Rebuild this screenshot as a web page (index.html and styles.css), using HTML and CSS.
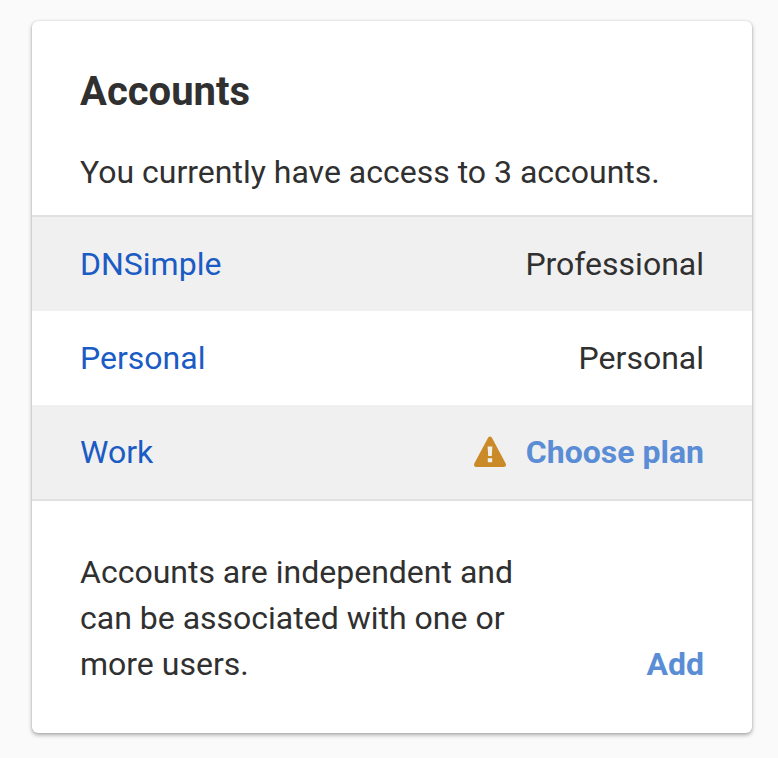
FILE: index.html
```html
<!DOCTYPE html>
<html lang="en">
<head>
<meta charset="utf-8">
<title>Accounts</title>
<link rel="stylesheet" href="styles.css">
</head>
<body>
<section class="card">
  <header class="card-header">
    <h2 class="title">Accounts</h2>
    <p class="summary">You currently have access to 3 accounts.</p>
  </header>
  <ul class="accounts">
    <li class="account"><a class="link" href="#">DNSimple</a><span>Professional</span></li>
    <li class="account"><a class="link" href="#">Personal</a><span>Personal</span></li>
    <li class="account"><a class="link" href="#">Work</a>
      <span class="plan">
        <svg class="warning" viewBox="0 0 34 32" aria-hidden="true"><path fill="#cb8a28" fill-rule="evenodd" d="M15.2 1.6Q17 -.8 18.8 1.6L32.7 27.4Q33.9 30.8 31 31H3Q.1 30.8 1.3 27.4ZM14.6 10.5L15.2 20H18.8L19.4 10.5ZM14.8 22.2V26.3H19.2V22.2Z"/></svg>
        <a class="action" href="#">Choose plan</a>
      </span>
    </li>
  </ul>
  <footer class="card-footer">
    <p class="note">Accounts are independent and can be associated with one or more users.</p>
    <a class="action" href="#">Add</a>
  </footer>
</section>
</body>
</html>
```
FILE: styles.css
```css
* { box-sizing: border-box; }
body {
  margin: 0;
  padding: 21px 26px 25px 32px;
  background: #fafafa;
  color: #303030;
  font: 32px/46px Roboto, "Liberation Sans", sans-serif;
}
a { text-decoration: none; }
.card {
  width: 720px;
  height: 712px;
  background: #fff;
  border-radius: 6px;
  box-shadow: 0 2px 4px rgba(0, 0, 0, .32), 0 0 2px rgba(0, 0, 0, .16);
}
.card-header { height: 194px; padding: 47px 48px 0; }
.title { margin: 0; font-size: 40px; line-height: 48px; font-weight: 700; }
.summary { margin: 33px 0 0; }
.accounts {
  margin: 0;
  padding: 0;
  list-style: none;
  border-top: 2px solid #e1e1e1;
  border-bottom: 2px solid #e1e1e1;
}
.account {
  display: flex;
  justify-content: space-between;
  align-items: center;
  height: 94px;
  padding: 0 48px;
}
.account:nth-child(odd) { background: #f0f0f0; }
.link { color: #1a5bc4; }
.plan { display: flex; align-items: center; gap: 19px; }
.warning { width: 34px; height: 32px; }
.action { color: #5a8dd6; font-weight: 700; }
.card-footer {
  display: flex;
  justify-content: space-between;
  align-items: flex-end;
  padding: 48px 48px 0;
}
.note { width: 460px; margin: 0; }
```
